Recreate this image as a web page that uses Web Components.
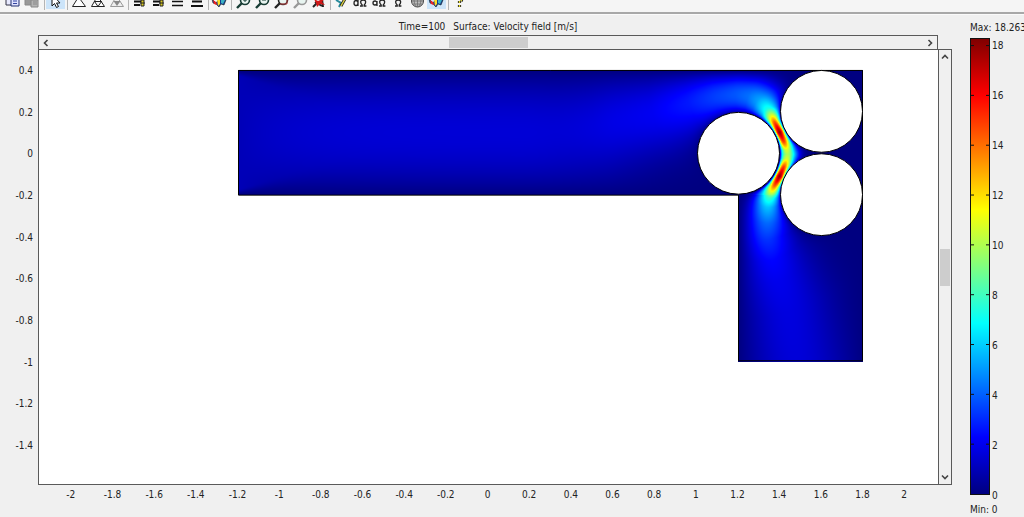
<!DOCTYPE html>
<html lang="en">
<head>
<meta charset="utf-8">
<title>Velocity field</title>
<style>
html, body { margin: 0; height: 100%; }
body { background: #f0f0f0; color: #222; font: 10px/14px "DejaVu Sans Condensed", "DejaVu Sans", Tahoma, sans-serif; overflow: hidden; }
</style>
</head>
<body>
<sim-app></sim-app>
<script>
const define = (name, html, setup) => {
  const t = document.createElement('template');
  t.innerHTML = html;
  customElements.define(name, class extends HTMLElement {
    connectedCallback() {
      if (this.shadowRoot) return;
      this.attachShadow({ mode: 'open' }).append(t.content.cloneNode(true));
      if (setup) setup(this, this.shadowRoot);
    }
  });
};

/* Icons are drawn in a 19 x 12 box, the lower part of each tool. */
const lens = (c, extra) => `<circle cx="12" cy="0" r="4.5" fill="#e8f4f0" stroke="${c}" stroke-width="1.6"/><path d="M9 3L4 8" stroke="${c}" stroke-width="2.4"/>${extra}`;
const omega = x => `<path d="M${x} 6h2.2v-1C${x} 3 ${x} 0 ${x + 3.2} 0s3 3 1 5v1h2.200" fill="none" stroke="#222" stroke-width="1.3"/>`;
const ICONS = {
  copy: '<path d="M2-4h8v9H2z" fill="#e8eaff" stroke="#334"/><path d="M7-2h8v8H7z" fill="#dfe2ff" stroke="#223070"/><path d="M9 1h4M9 3.500h4" stroke="#3446a0"/>',
  paste: '<path d="M2-4h10v9H2z" fill="#999" stroke="#888"/><path d="M8 0h7v7H8z" fill="#b4b4b4" stroke="#888"/><path d="M10 2h4M10 4h4" stroke="#888"/>',
  select: '<path d="M6-6v12l2.500-2.500 2 4 2-1-2-3.500h3.500z" fill="#fff" stroke="#111"/>',
  mesh: '<path d="M9.500-3L3.500 6.500h13z" fill="#fff" stroke="#222"/>',
  refine: '<path d="M9.500-4L3.500 6.500h13zM6.500 1.500h7L10 6.500z" fill="#fff" stroke="#222"/>',
  refineSel: '<path d="M9.500-4L3.500 6.500h13z" fill="#eee" stroke="#999"/><path d="M6.500 1h7L10 6z" fill="#888"/>',
  params: '<path d="M4 1.500h10M4 5h6" stroke="#111" stroke-width="1.800"/><path d="M11 0h3v6h-3z" fill="#d8c820" stroke="#222"/><path d="M10 3h5" stroke="#222"/>',
  solve: '<path d="M4 1.500h11M4 5.500h11" stroke="#111" stroke-width="1.600"/>',
  restart: '<path d="M5 1.500h10M4 6h12" stroke="#111" stroke-width="1.800"/>',
  plot: '<path d="M2-1l4 4 4-5 6 2-2 5-3-1-2 3-3-3-3-1z" fill="#183a90" stroke="#122" stroke-width=".6"/><path d="M3 0l3 2 1 3-3-1z" fill="#e22"/><path d="M7-1h3v5l-2 2z" fill="#fd2"/><path d="M11 0l4 0-2 4-2-1z" fill="#3bb3c4"/>',
  zin: lens('#173c34', '<path d="M10 0h4M12-2v4" stroke="#173c34"/>'),
  zout: lens('#173c34', '<path d="M10 0h4" stroke="#173c34"/>'),
  zwin: lens('#222', '<path d="M9 4h7v-7" stroke="#b44" fill="none"/>'),
  zsel: lens('#999', ''),
  zext: '<path d="M4 7l5-5M6 2l7 4M13-1l1 8" stroke="#222" stroke-width="2"/><path d="M5-1l4 2 7-3-3 4 3 3-5-1-3 3-1-4z" fill="#d01818"/>',
  draw: '<path d="M4 0l5 3-2 4" fill="none" stroke="#278a9b" stroke-width="2"/><path d="M14-3L9 6" stroke="#222" stroke-width="3"/><path d="M14-3L9 6" stroke="#d8d040" stroke-width="1.400"/>',
  bnd: '<path d="M7-2v8M7 3a2 2.500 0 1 0-4 0a2 2.500 0 1 0 4 0" fill="none" stroke="#222" stroke-width="1.300"/>' + omega(9),
  sub: '<path d="M7 1v5M7 3a2 2 0 1 0-4 0a2 2 0 1 0 4 0" fill="none" stroke="#222" stroke-width="1.300"/>' + omega(9),
  dom: omega(6),
  sphere: '<circle cx="9.500" cy="1" r="6" fill="#bbb" stroke="#444"/><path d="M4 1h11M5 4h9M9.500-5v12M6 0q0 4 2 6M13 0q0 4-2 6" fill="none" stroke="#666" stroke-width=".7"/>',
  help: '<path d="M9-2q4 0 2 3M9.500 1v2M9.500 5v2" stroke="#222" stroke-width="3.200"/><path d="M9-2q4 0 2 3M9.500 1v2M9.500 5v2" fill="none" stroke="#e2d52a" stroke-width="1.400"/>'
};
const TOOLS = [['copy','Copy'],['paste','Paste'],0,['select','Select',1],0,['mesh','Mesh'],['refine','Refine mesh'],['refineSel','Refine selection'],0,['params','Solver parameters'],['params','Solver manager'],['solve','Solve'],['restart','Restart'],0,['plot','Plot parameters'],0,['zin','Zoom in'],['zout','Zoom out'],['zwin','Zoom window'],['zsel','Zoom selection'],['zext','Zoom extents'],0,['draw','Draw mode'],['bnd','Point mode'],['sub','Boundary mode'],['dom','Subdomain mode'],['sphere','Mesh mode'],['plot','Postprocessing mode',1],0,['help','Help']];

define('tool-button', `<style>
:host { display: block; width: 19px; height: 12px; }
button { display: block; width: 100%; height: 100%; padding: 0; border: 0; background: none; }
:host([pressed]) button { background: linear-gradient(#cce4f9 0 9px, transparent 9px); }
svg { display: block; overflow: hidden; }
</style><button type="button"><svg width="19" height="12" viewBox="0 0 19 12" fill="none"></svg></button>`, (h, r) => {
  r.querySelector('svg').innerHTML = ICONS[h.getAttribute('icon')];
  r.querySelector('button').setAttribute('aria-label', h.getAttribute('label'));
});

define('tool-bar', `<style>
:host { display: flex; padding-left: 4px; height: 12px; background: #f5f5f5; border-bottom: 2px solid #a8a8a8; box-shadow: 0 1px #fafafa; }
i { width: 1px; margin: 0 1px 2px 2px; background: #b4b4b4; }
</style>`, (h, r) => {
  for (const t of TOOLS) {
    const e = document.createElement(t ? 'tool-button' : 'i');
    if (t) { e.setAttribute('icon', t[0]); e.setAttribute('label', t[1]); if (t[2]) e.setAttribute('pressed', ''); }
    r.append(e);
  }
});

define('scroll-bar', `<style>
:host { display: flex; box-sizing: border-box; border: 1px solid #5a5a5a; background: #f0f0f0; }
:host([vertical]) { flex-direction: column; }
button { flex: 0 0 14px; padding: 0; border: 0; background: none; display: grid; place-items: center; }
.track { flex: 1; display: flex; flex-direction: inherit; padding: 1px; }
.before { flex: var(--before) 1 0; } .thumb { flex: var(--size) 1 0; background: #cdcdcd; } .after { flex: var(--after) 1 0; }
svg { overflow: visible; }
:host([vertical]) svg { transform: rotate(90deg); }
</style><button type="button" aria-label="Back"><svg width="8" height="8"><path d="M5.500 1L2.500 4l3 3" fill="none" stroke="#444" stroke-width="1.600"/></svg></button>
<div class="track"><div class="before"></div><div class="thumb"></div><div class="after"></div></div>
<button type="button" aria-label="Forward"><svg width="8" height="8"><path d="M2.500 1l3 3-3 3" fill="none" stroke="#444" stroke-width="1.600"/></svg></button>`);

const jet = t => [1.5 - Math.abs(4 * t - 3), 1.5 - Math.abs(4 * t - 2), 1.5 - Math.abs(4 * t - 1)].map(c => 255 * Math.max(0, Math.min(1, c)));

/* Jet centre line in plot units of 1/900 width: x, y, relative speed, spread. */
const JET = [[500,80,.08,36],[560,74,.09,36],[620,62,.115,30],[655,50,.155,24],[680,44,.2,22],[700,42,.23,20],[714,45,.255,18],[724,52,.31,15],[731,62,.44,10],[736,72,.8,5],[741,82,1,5],[745,91,.83,5],[748,98,.6,6],[749,104,.54,7],[748,110,.6,6],[745,117,.83,5],[741,126,1,5],[736,135,.8,5],[731,144,.48,9],[729,153,.35,12],[728,168,.25,16],[727,184,.19,18],[731,204,.135,22],[737,226,.11,28],[748,258,.095,32],[760,325,.085,36]];
const BALLS = [[700.5,103.5],[783.5,61.5],[783.5,145]];
const R = 41;
const dense = [];
JET.forEach((a, i) => {
  const b = JET[i + 1];
  if (b) for (let k = 0; k < 12; k++) dense.push(a.map((v, j) => v + (b[j] - v) * k / 12));
});
const smooth = (a, b, x) => { const t = Math.max(0, Math.min(1, (x - a) / (b - a))); return t * t * (3 - 2 * t); };
function speed(x, y) {
  let jetSpeed = 0;
  for (const p of dense) {
    const dx = x - p[0], dy = y - p[1], q = (dx * dx + dy * dy) / (2 * p[3] * p[3]);
    if (q < 6) jetSpeed = Math.max(jetSpeed, p[2] * Math.exp(-q));
  }
  let wall = Math.min(y - 20, 825 - x);
  if (x < 700) wall = Math.min(wall, 145 - y); else if (y > 145) wall = Math.min(wall, x - 700);
  let ball = 99;
  for (const b of BALLS) ball = Math.min(ball, Math.hypot(x - b[0], y - b[1]) - R);
  const s = (y - 82.5) / 62.5, entry = Math.exp(-(x - 200) / 50);
  const pipe = .085 * Math.max(0, 1 - s * s) * (1 - entry) + .055 * entry * smooth(0, 6 + (x - 200) / 3, Math.max(0, wall));
  const base = pipe * (1 - smooth(480, 690, x));
  const away = 3 + 7 * smooth(0, 60, Math.hypot(x - 749, y - 104) - 25);
  jetSpeed *= (1 - Math.exp(-Math.max(0, wall) / 9)) * (1 - .9 * Math.exp(-Math.max(0, ball) * 2.5 / away)) * smooth(440, 580, x);
  return Math.pow(base ** 3 + jetSpeed ** 3, 1 / 3);
}

define('flow-plot', `<style>
:host { display: block; position: relative; overflow: hidden; background: #fff; border: solid #5a5a5a; border-width: 0 0 1px 1px; }
canvas { position: absolute; inset: 0; width: 100%; height: 100%; }
</style><canvas role="img" aria-label="Velocity field surface plot"></canvas>`, (h, r) => {
  const c = r.querySelector('canvas');
  const draw = () => {
    const w = c.width = h.clientWidth, H = c.height = h.clientHeight;
    if (!w || !H) return;
    const g = c.getContext('2d'), sx = w / 899, sy = H / 435, img = g.createImageData(w, H);
    for (let j = 0; j < H; j++) for (let i = 0; i < w; i++) {
      const x = i / sx + 1, y = j / sy;
      if (x < 200 || x >= 825 || y < 20 || y > 312 || (x < 700 && y > 145)) continue;
      img.data.set([...jet(speed(x, y)), 255], (j * w + i) * 4);
    }
    g.putImageData(img, 0, 0);
    g.scale(sx, sy);
    g.translate(-1, 0);
    g.strokeStyle = '#000';
    g.fillStyle = '#fff';
    g.stroke(new Path2D('M200.500 20.500H824.500V311.500H700.500V145.500H200.500Z'));
    for (const b of BALLS) { g.beginPath(); g.arc(b[0], b[1], R, 0, 7); g.fill(); g.stroke(); }
  };
  draw();
  new ResizeObserver(draw).observe(h);
});

define('axis-labels', `<style>
:host { display: grid; grid-auto-flow: column; grid-auto-columns: 1fr; text-align: center; }
:host([vertical]) { grid-auto-flow: row; grid-auto-rows: 1fr; text-align: right; align-items: center; }
</style>`, (h, r) => {
  const from = +h.getAttribute('from'), step = +h.getAttribute('step'), n = +h.getAttribute('count');
  for (let i = 0; i < n; i++) {
    const s = document.createElement('span');
    s.textContent = String(Math.round((from + i * step) * 10) / 10 || 0);
    r.append(s);
  }
});

define('color-scale', `<style>
:host { display: grid; grid-template: 17px 1fr 22px / 20px 1fr; column-gap: 2px; }
.max, .min { grid-column: 1 / 3; white-space: nowrap; }
.min { align-self: end; }
.bar { position: relative; border: 1px solid #111; background: linear-gradient(#800000, #f00 12.5%, #ff0 37.5%, #0ff 62.5%, #00f 87.5%, #000080); }
svg { position: absolute; inset: 0; width: 100%; height: 100%; }
.labels { display: flex; flex-direction: column; justify-content: space-between; margin: 1px 0 -8px; }
</style><div class="max">Max: 18.263</div>
<div class="bar"><svg viewBox="0 0 18 18.263" preserveAspectRatio="none"></svg></div><div class="labels"></div><div class="min">Min: 0</div>`, (h, r) => {
  let d = '';
  for (let v = 18; v >= 0; v -= 2) {
    const s = document.createElement('span');
    s.textContent = v;
    r.querySelector('.labels').append(s);
    if (v) d += `M0 ${18.263 - v}h3M15 ${18.263 - v}h3`;
  }
  r.querySelector('svg').innerHTML = `<path d="${d}" stroke="#111" vector-effect="non-scaling-stroke"/>`;
});

define('sim-app', `<style>
:host { display: flex; flex-direction: column; height: 100vh; }
main { flex: 1; display: grid; grid-template-columns: 38px 1fr 14px 18px 54px; grid-template-rows: 21px 15px 1fr 32px; min-height: 0; }
header { grid-area: 1 / 2 / 2 / 3; display: flex; justify-content: center; gap: 8px; padding-top: 6px; }
.h { grid-area: 2 / 2; --before: 390; --size: 78; --after: 389; }
.y { grid-area: 3 / 1; padding: 0 5px 18px 0; }
flow-plot { grid-area: 3 / 2; }
.v { grid-area: 3 / 3; margin-top: -1px; --before: 183; --size: 37; --after: 182; }
.x { grid-area: 4 / 2; padding: 3px 13px 0 12px; }
color-scale { grid-area: 1 / 5 / 5 / 6; padding: 7px 0 0; }
</style>
<tool-bar role="toolbar"></tool-bar>
<main>
<header><span>Time=100</span><span>Surface: Velocity field [m/s]</span></header>
<scroll-bar class="h"></scroll-bar>
<axis-labels class="y" vertical from="0.4" step="-0.2" count="10"></axis-labels>
<flow-plot></flow-plot>
<scroll-bar class="v" vertical></scroll-bar>
<axis-labels class="x" from="-2" step="0.2" count="21"></axis-labels>
<color-scale></color-scale>
</main>`);
</script>
</body>
</html>
